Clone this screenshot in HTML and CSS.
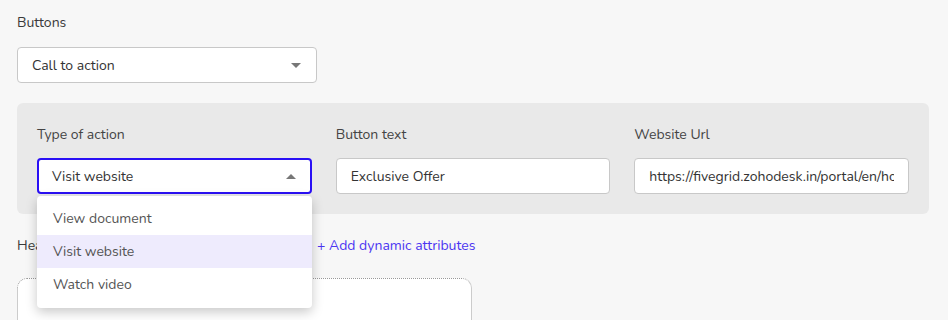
FILE: index.html
```html
<!DOCTYPE html>
<html lang="en">
<head>
    <meta charset="UTF-8">
    <meta name="viewport" content="width=device-width, initial-scale=1.0">
    <title>Buttons</title>
    <link rel="stylesheet" href="styles.css">
</head>
<body>
    <div class="section-label">Buttons</div>
    <div class="select select-type">
        <span>Call to action</span>
        <span class="caret"></span>
    </div>

    <div class="action-panel">
        <div class="action-field">
            <label class="field-label">Type of action</label>
            <div class="select-wrap">
                <div class="select select-open">
                    <span>Visit website</span>
                    <span class="caret caret-up"></span>
                </div>
                <ul class="menu">
                    <li class="menu-item">View document</li>
                    <li class="menu-item active">Visit website</li>
                    <li class="menu-item">Watch video</li>
                </ul>
            </div>
        </div>
        <div class="action-field">
            <label class="field-label" for="btnText">Button text</label>
            <input class="text-input" id="btnText" type="text" value="Exclusive Offer">
        </div>
        <div class="action-field">
            <label class="field-label" for="siteUrl">Website Url</label>
            <input class="text-input" id="siteUrl" type="text" value="https://fivegrid.zohodesk.in/portal/en/home">
        </div>
    </div>

    <div class="header-row">
        <span class="header-label">Header</span>
        <a class="add-link" href="#">+ Add dynamic attributes</a>
    </div>
    <div class="editor-box"></div>
</body>
</html>
```

FILE: styles.css
```css
body {
    margin: 0;
    padding: 13px 20px 0 17px;
    font-family: 'Nunito', 'Lato', sans-serif;
    font-size: 14px;
    background-color: #f7f7f7;
    color: #333;
}
.section-label {
    line-height: 20px;
    margin-bottom: 14px;
    color: #3a3a3a;
}
.select {
    box-sizing: border-box;
    display: flex;
    align-items: center;
    justify-content: space-between;
    height: 36px;
    padding: 0 15px 0 14px;
    background-color: #fff;
    border: 1px solid #c8c8c8;
    border-radius: 4px;
    color: #333;
}
.select-type {
    width: 300px;
}
.caret {
    width: 0;
    height: 0;
    border-left: 5px solid transparent;
    border-right: 5px solid transparent;
    border-top: 5px solid #777;
}
.caret-up {
    border-top: none;
    border-bottom: 5px solid #777;
}
.action-panel {
    display: flex;
    gap: 24px;
    width: 912px;
    box-sizing: border-box;
    margin-top: 20px;
    padding: 22px 20px 20px;
    background-color: #e9e9e9;
    border-radius: 6px;
}
.action-field {
    flex: 1;
}
.field-label {
    display: block;
    line-height: 20px;
    margin-bottom: 13px;
    color: #444;
}
.select-wrap {
    position: relative;
}
.select-open {
    border: 2px solid #2a10f5;
    padding: 0 14px 0 13px;
}
.text-input {
    box-sizing: border-box;
    width: 100%;
    height: 36px;
    padding: 0 14px;
    font-family: inherit;
    font-size: 14px;
    color: #333;
    background-color: #fff;
    border: 1px solid #c8c8c8;
    border-radius: 4px;
    outline: none;
}
.menu {
    position: absolute;
    top: calc(100% + 2px);
    left: 0;
    right: 0;
    margin: 0;
    padding: 6px 0 7px;
    list-style: none;
    background-color: #fff;
    border-radius: 4px;
    box-shadow: 0 4px 12px rgba(0, 0, 0, 0.22);
    z-index: 2;
}
.menu-item {
    height: 33px;
    line-height: 33px;
    padding-left: 16px;
    color: #555;
}
.menu-item.active {
    background-color: #eeebfd;
}
.header-row {
    display: flex;
    margin-top: 22px;
    line-height: 20px;
}
.header-label {
    width: 300px;
    color: #3a3a3a;
}
.add-link {
    color: #4b35f2;
    text-decoration: none;
}
.editor-box {
    width: 455px;
    height: 80px;
    margin-top: 22px;
    box-sizing: border-box;
    background-color: #fff;
    border: 1px dotted #999;
    border-right: 1px solid #ccc;
    border-radius: 10px 10px 0 0;
}
```
